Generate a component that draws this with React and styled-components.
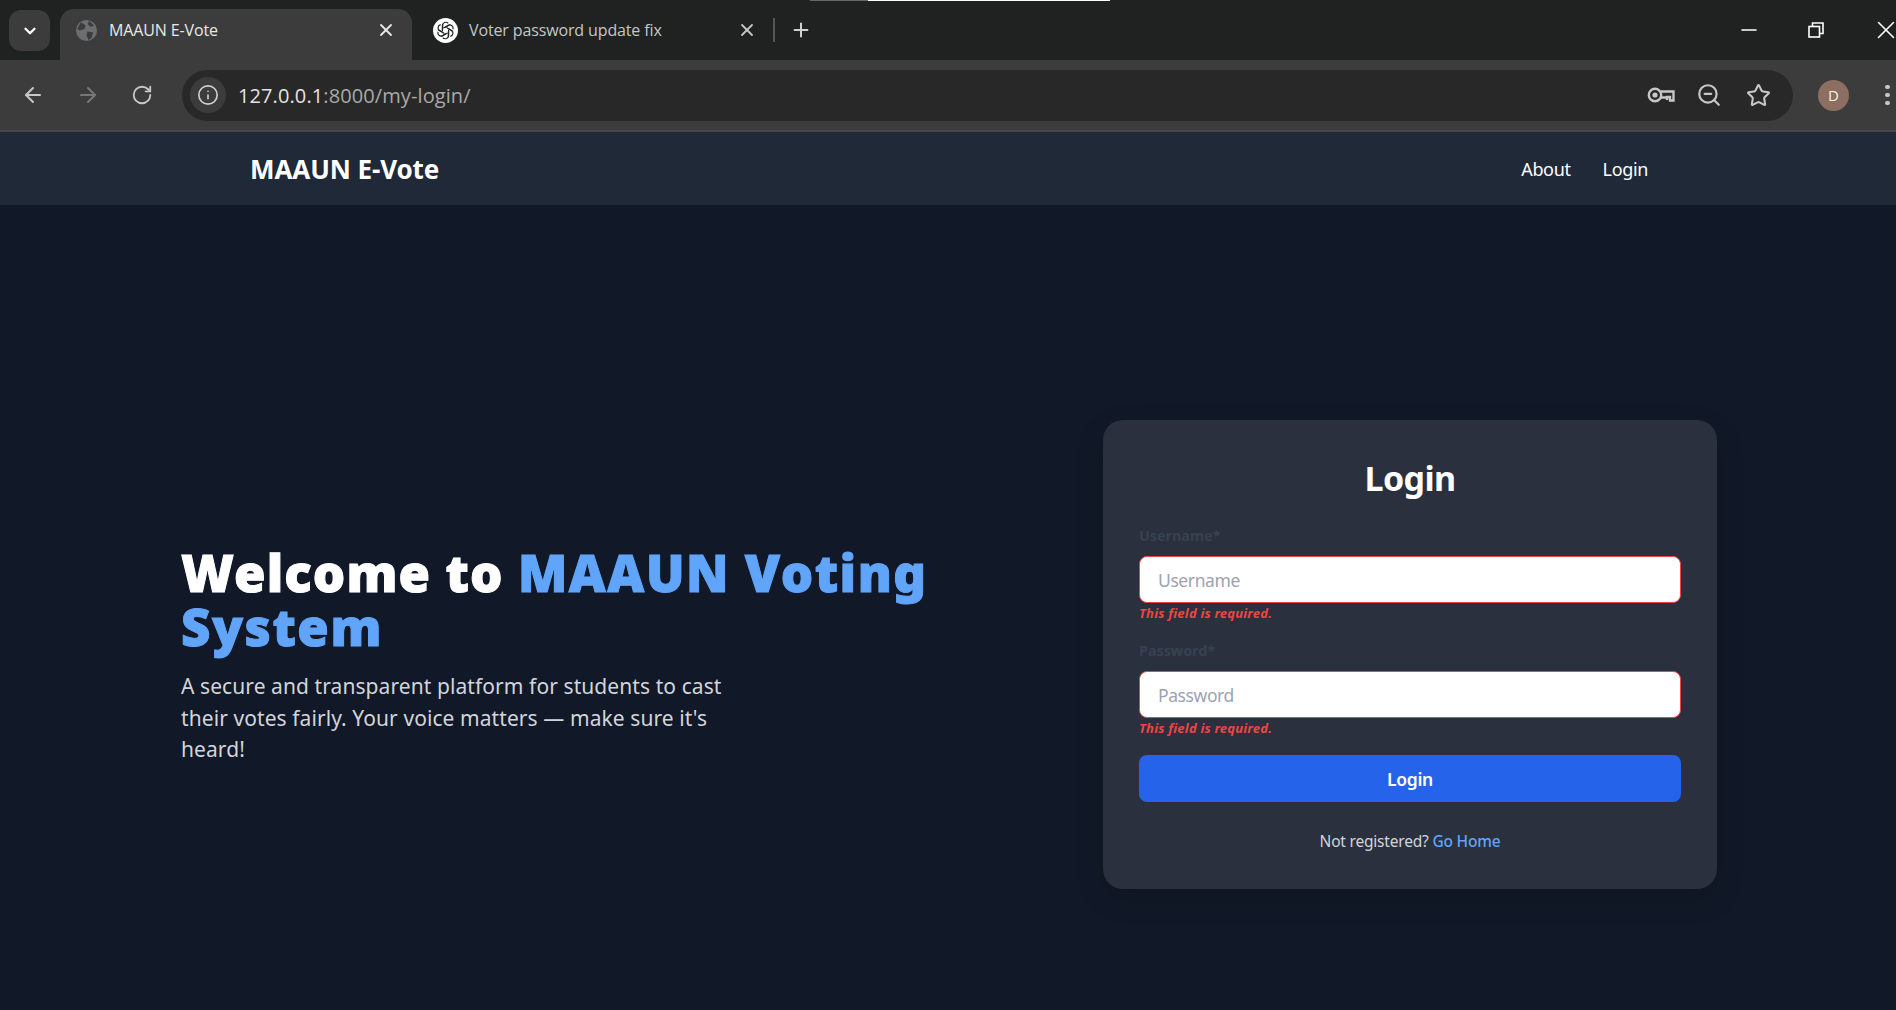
import React from "react";
import styled, { createGlobalStyle } from "styled-components";
import { ArrowLeft, ArrowRight, RotateCw, Info, Star, ZoomOut, X, Plus, ChevronDown, Minus } from "lucide-react";

const Global = createGlobalStyle`
  html, body { margin: 0; padding: 0; background: #111827; }
  body { font-family: "Noto Sans", "Open Sans", sans-serif; height: 1010px; overflow: hidden; }
  * { box-sizing: border-box; }
`;

const Browser = styled.div`
  display: flex; flex-direction: column; height: 132px; background: #3c3c3c; font-family: "Open Sans", sans-serif;
`;
const TabStrip = styled.div`
  position: relative; display: flex; align-items: flex-end; height: 60px; background: #202221; padding-left: 9px; color: #fff;
`;
const ShareBar = styled.div`
  position: absolute; top: 0; left: 810px; width: 300px; height: 1px;
  background: linear-gradient(90deg, #666 0 58px, #fff 58px);
`;
const TabMenu = styled.div`
  display: flex; align-items: center; justify-content: center; width: 41px; height: 41px; margin: 0 10px 9px 0;
  border-radius: 12px; background: #3c3c3c;
`;
const Tab = styled.div`
  display: flex; align-items: center; width: ${p => p.$w}px; height: 51px; padding: 0 16px 9px ${p => p.$pad}px; 
  border-radius: 14px 14px 0 0; background: ${p => (p.$active ? "#3c3c3c" : "transparent")};
  font-size: 16px; letter-spacing: -0.13px; color: ${p => (p.$active ? "#e8e8e8" : "#c4c7c5")};
`;
const TabTitle = styled.span`
  flex: 1; margin-left: ${p => p.$gap}px;
`;
const TabDivider = styled.div`
  width: 2px; height: 24px; margin: 0 15px 18px 0; background: #555;
`;
const NewTab = styled.div`
  display: flex; margin-bottom: 19px;
`;
const WindowControls = styled.div`
  display: flex; align-items: center; gap: 47px; margin-left: auto; margin-right: -5px; height: 60px;
`;
const Toolbar = styled.div`
  display: flex; align-items: center; height: 72px; padding: 0 0 0 21px; border-bottom: 2px solid #484848; color: #c7c7c7;
`;
const NavIcons = styled.div`
  display: flex; align-items: center; gap: 31px; width: 161px;
`;
const Omnibox = styled.div`
  display: flex; align-items: center; width: 1611px; height: 51px; padding: 0 22px 0 8px; border-radius: 26px; background: #282828;
`;
const SiteInfo = styled.div`
  display: flex; align-items: center; justify-content: center; width: 36px; height: 36px; border-radius: 50%; background: #3c3c3c; color: #d0d0d0;
`;
const Url = styled.div`
  flex: 1; margin-left: 12px; font-size: 20px; letter-spacing: 0.1px; color: #a9a9a9;
`;
const Host = styled.span`
  color: #e3e3e3;
`;
const OmniIcons = styled.div`
  display: flex; align-items: center; gap: 21px;
  & > :last-child { margin-left: 3px; }
`;
const Avatar = styled.div`
  display: flex; align-items: center; justify-content: center; width: 31px; height: 31px; margin-left: 25px; border-radius: 50%;
  background: #8d6e63; color: #f2f2f2; font-size: 15px;
`;
const Kebab = styled.div`
  display: flex; flex-direction: column; gap: 3.5px; margin-left: 36px;
`;
const Dot = styled.span`
  width: 4.5px; height: 4.5px; border-radius: 50%; background: #c7c7c7;
`;

const Navbar = styled.nav`
  display: flex; align-items: center; justify-content: space-between; height: 73px; padding: 0 248px 0 250px; background: #1f2937; color: #fff;
`;
const Brand = styled.div`
  font-size: 26px; font-weight: 700; letter-spacing: -0.1px;
`;
const NavLinks = styled.div`
  display: flex; gap: 32px; font-size: 18px; letter-spacing: -0.35px;
`;

const Main = styled.main`
  display: flex; align-items: center; justify-content: space-between; height: 805px; padding: 94px 179px 0 181px;
`;
const Hero = styled.section`
  width: 760px; padding-top: 2px;
`;
const Title = styled.h1`
  margin: 0 0 18px; font-size: 51px; font-weight: 900; line-height: 54px; color: #fff; letter-spacing: 1.1px; -webkit-text-stroke: 1px currentColor;
`;
const Accent = styled.span`
  color: #60a5fa; letter-spacing: 1.5px;
`;
const Lead = styled.p`
  margin: 0; max-width: 580px; font-size: 21px; line-height: 31.5px; letter-spacing: 0.08px; color: #d1d5db;
`;
const Card = styled.section`
  width: 614px; height: 469px; padding: 36px 36px 0; border-radius: 20px; background: #2a303d; box-shadow: 0 10px 30px rgba(0,0,0,.12);
`;
const CardTitle = styled.h2`
  margin: 0 0 24px; height: 44px; font-size: 34px; font-weight: 700; line-height: 44px; text-align: center; color: #fff; letter-spacing: -0.6px;
`;
const Field = styled.div`
  display: flex; flex-direction: column; margin-bottom: 16px;
`;
const Label = styled.label`
  height: 22px; margin-bottom: 10px; font-size: 14.5px; font-weight: 700; line-height: 22px; color: #374151; letter-spacing: -0.1px;
`;
const Input = styled.input`
  height: 47px; padding: 0 18px; border: 1.5px solid #ef4444; border-radius: 8px; background: #fff; font: 17.5px "Noto Sans", sans-serif; letter-spacing: -0.4px;
  &::placeholder { color: #9ca3af; opacity: 1; }
`;
const ErrorText = styled.span`
  height: 20px; font-size: 13px; font-style: italic; font-weight: 700; line-height: 20px; color: #ef4444; letter-spacing: 0.2px;
`;
const Submit = styled.button`
  display: block; width: 100%; height: 47px; margin-top: 17px; border: 0; border-radius: 8px; background: #2563eb; color: #fff;
  font: 600 17.5px "Noto Sans", sans-serif; letter-spacing: -0.3px;
`;
const Foot = styled.p`
  margin: 27px 0 0; font-size: 15.5px; line-height: 24px; text-align: center; color: #d1d5db; letter-spacing: -0.2px;
`;
const FootLink = styled.a`
  color: #60a5fa; font-weight: 500;
`;

const Globe = () => (
  <svg width="23" height="23" viewBox="0 0 24 24">
    <circle cx="12" cy="12" r="11" fill="#6b6d6f" />
    <path d="M6 3.5l5 3-1 4-5 1.5-2.5-1.5zM13 13l6 1-2 6-3 2-2-5zM15 2l5 5-4 1-3-3z" fill="#3c3c3c" />
  </svg>
);
const Knot = () => (
  <svg width="25" height="25" viewBox="0 0 24 24">
    <circle cx="12" cy="12" r="12" fill="#fff" />
    <g fill="none" stroke="#202221" strokeWidth="1.15">
      {[0, 60, 120, 180, 240, 300].map(a => (
        <path key={a} d="M9 12.5V7.3a3.2 3.2 0 0 1 5.6-2.1M11.5 9.2l4.6-2.7" transform={`rotate(${a} 12 12)`} />
      ))}
    </g>
  </svg>
);
const KeyIcon = () => (
  <svg width="28" height="18" viewBox="0 0 28 18" fill="none" stroke="#c7c7c7" strokeWidth="2.4">
    <circle cx="8" cy="9" r="6.2" />
    <circle cx="8" cy="9" r="2.6" fill="#c7c7c7" stroke="none" />
    <path d="M14 5.5h12.5v9h-3.5v-3.5h-3v3M14 11.5h6" />
  </svg>
);
const RestoreIcon = () => (
  <svg width="16" height="16" viewBox="0 0 16 16" fill="none" stroke="#fff" strokeWidth="1.6">
    <rect x="1" y="4.5" width="10.5" height="10.5" />
    <path d="M4.5 4.5V1H15v10.5h-3.5" />
  </svg>
);

export default function App() {
  return (
    <>
      <Global />
      <Browser>
        <TabStrip>
          <ShareBar />
          <TabMenu><ChevronDown size={18} strokeWidth={3} /></TabMenu>
          <Tab $active $w={352} $pad={15}>
            <Globe />
            <TabTitle $gap={11}>MAAUN E-Vote</TabTitle>
            <X size={20} strokeWidth={2.2} />
          </Tab>
          <Tab $w={361} $pad={21}>
            <Knot />
            <TabTitle $gap={11}>Voter password update fix</TabTitle>
            <X size={20} strokeWidth={2.2} />
          </Tab>
          <TabDivider />
          <NewTab><Plus size={22} strokeWidth={2.2} color="#d0d0d0" /></NewTab>
          <WindowControls>
            <Minus size={24} strokeWidth={1.6} />
            <RestoreIcon />
            <X size={30} strokeWidth={1.3} />
          </WindowControls>
        </TabStrip>
        <Toolbar>
          <NavIcons>
            <ArrowLeft size={24} strokeWidth={2} />
            <ArrowRight size={24} strokeWidth={2} color="#777" />
            <RotateCw size={22} strokeWidth={2} />
          </NavIcons>
          <Omnibox>
            <SiteInfo><Info size={22} strokeWidth={1.8} /></SiteInfo>
            <Url><Host>127.0.0.1</Host>:8000/my-login/</Url>
            <OmniIcons>
              <KeyIcon />
              <ZoomOut size={26} strokeWidth={2} />
              <Star size={25} strokeWidth={2} strokeLinejoin="miter" />
            </OmniIcons>
          </Omnibox>
          <Avatar>D</Avatar>
          <Kebab><Dot /><Dot /><Dot /></Kebab>
        </Toolbar>
      </Browser>
      <Navbar>
        <Brand>MAAUN E-Vote</Brand>
        <NavLinks><span>About</span><span>Login</span></NavLinks>
      </Navbar>
      <Main>
        <Hero>
          <Title>Welcome to <Accent>MAAUN Voting System</Accent></Title>
          <Lead>A secure and transparent platform for students to cast their votes fairly. Your voice matters — make sure it's heard!</Lead>
        </Hero>
        <Card>
          <CardTitle>Login</CardTitle>
          <Field>
            <Label>Username*</Label>
            <Input placeholder="Username" />
            <ErrorText>This field is required.</ErrorText>
          </Field>
          <Field>
            <Label>Password*</Label>
            <Input placeholder="Password" />
            <ErrorText>This field is required.</ErrorText>
          </Field>
          <Submit>Login</Submit>
          <Foot>Not registered? <FootLink>Go Home</FootLink></Foot>
        </Card>
      </Main>
    </>
  );
}
